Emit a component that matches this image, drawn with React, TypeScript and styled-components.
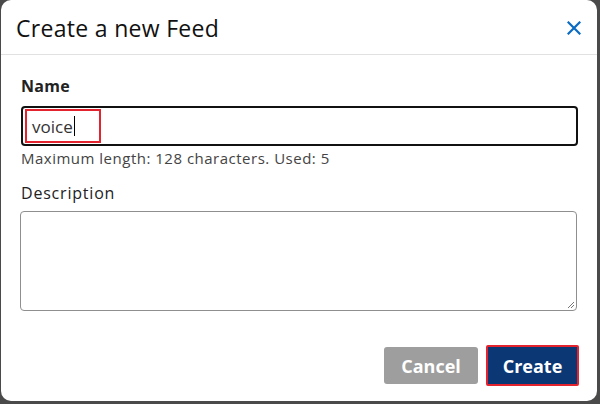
import React from "react";
import styled, { createGlobalStyle } from "styled-components";

const Global = createGlobalStyle`
  html, body { margin: 0; padding: 0; background: #4a4a4a; }
  body { font-family: "Open Sans", Lato, sans-serif; }
`;

const Page = styled.div`
  width: 600px;
  height: 404px;
  padding: 0 3px 3px 1px;
  box-sizing: border-box;
`;

const Dialog = styled.div`
  width: 596px;
  height: 401px;
  background: #fff;
  border-radius: 10px;
  display: flex;
  flex-direction: column;
  box-sizing: border-box;
`;

const Header = styled.div`
  height: 55px;
  border-bottom: 1px solid #e1e1e1;
  display: flex;
  align-items: center;
  justify-content: space-between;
  padding: 1px 15px 0 15px;
  box-sizing: border-box;
`;

const Title = styled.h1`
  margin: 0;
  font-size: 23px;
  font-weight: 400;
  color: #111;
  letter-spacing: 0.3px;
`;

const Close = styled.button`
  background: none;
  border: none;
  padding: 0;
  width: 16px;
  height: 16px;
  display: flex;
  align-items: center;
  justify-content: center;
  cursor: pointer;
`;

const Body = styled.div`
  padding: 21px 18px 0 18px;
  display: flex;
  flex-direction: column;
`;

const Label = styled.label<{ $bold?: boolean }>`
  font-size: 16px;
  font-weight: ${(p) => (p.$bold ? 700 : 400)};
  letter-spacing: ${(p) => (p.$bold ? 0.3 : 0.8)}px;
  color: #222;
  line-height: 20px;
  margin-bottom: ${(p) => (p.$bold ? 10 : 8)}px;
  padding-left: 2px;
`;

const InputBox = styled.div`
  height: 40px;
  border: 2px solid #111;
  border-radius: 4px;
  display: flex;
  align-items: center;
  padding: 0 2px;
  box-sizing: border-box;
  margin-left: 2px;
  margin-right: 1px;
`;

const Highlight = styled.div`
  border: 2px solid #e3232d;
  height: 34px;
  width: 76px;
  box-sizing: border-box;
  display: flex;
  align-items: center;
  padding-left: 5px;
  font-size: 17px;
  color: #333;
`;

const Caret = styled.span`
  display: inline-block;
  width: 1px;
  height: 20px;
  background: #000;
  margin-left: 1px;
`;

const Helper = styled.div`
  font-size: 15px;
  letter-spacing: 0.5px;
  color: #444;
  margin: 2px 0 0 2px;
  line-height: 20px;
`;

const Spacer = styled.div<{ $h: number }>`
  height: ${(p) => p.$h}px;
`;

const TextArea = styled.div`
  height: 100px;
  border: 1px solid #8f8f8f;
  border-radius: 4px;
  position: relative;
  box-sizing: border-box;
  margin-left: 1px;
  margin-right: 2px;
`;

const Grip = styled.svg`
  position: absolute;
  right: 1px;
  bottom: 1px;
`;

const Footer = styled.div`
  display: flex;
  justify-content: flex-end;
  align-items: center;
  gap: 8px;
  padding: 34px 18px 0 0;
`;

const Button = styled.button<{ $primary?: boolean }>`
  font-family: "Open Sans", Lato, sans-serif;
  font-size: 18px;
  font-weight: 700;
  color: #fff;
  border-radius: 3px;
  cursor: pointer;
  box-sizing: border-box;
  padding: 0;
  ${(p) =>
    p.$primary
      ? `background:#0b3875;border:2px solid #e3232d;border-radius:2px;width:93px;height:41px;`
      : `background:#9e9e9e;border:none;width:94px;height:37px;`}
`;

export default function App() {
  return (
    <>
      <Global />
      <Page>
        <Dialog>
          <Header>
            <Title>Create a new Feed</Title>
            <Close aria-label="Close">
              <svg width="14" height="14" viewBox="0 0 14 14">
                <path d="M1.5 1.5 L12.5 12.5 M12.5 1.5 L1.5 12.5" stroke="#0a6bc4" strokeWidth="2.2" strokeLinecap="square" />
              </svg>
            </Close>
          </Header>
          <Body>
            <Label $bold>Name</Label>
            <InputBox>
              <Highlight>
                voice<Caret />
              </Highlight>
            </InputBox>
            <Helper>Maximum length: 128 characters. Used: 5</Helper>
            <Spacer $h={15} />
            <Label>Description</Label>
            <TextArea>
              <Grip width="9" height="9" viewBox="0 0 9 9">
                <path d="M8 2 L2 8 M8 5 L5 8" stroke="#777" strokeWidth="1" />
              </Grip>
            </TextArea>
          </Body>
          <Footer>
            <Button>Cancel</Button>
            <Button $primary>Create</Button>
          </Footer>
        </Dialog>
      </Page>
    </>
  );
}
